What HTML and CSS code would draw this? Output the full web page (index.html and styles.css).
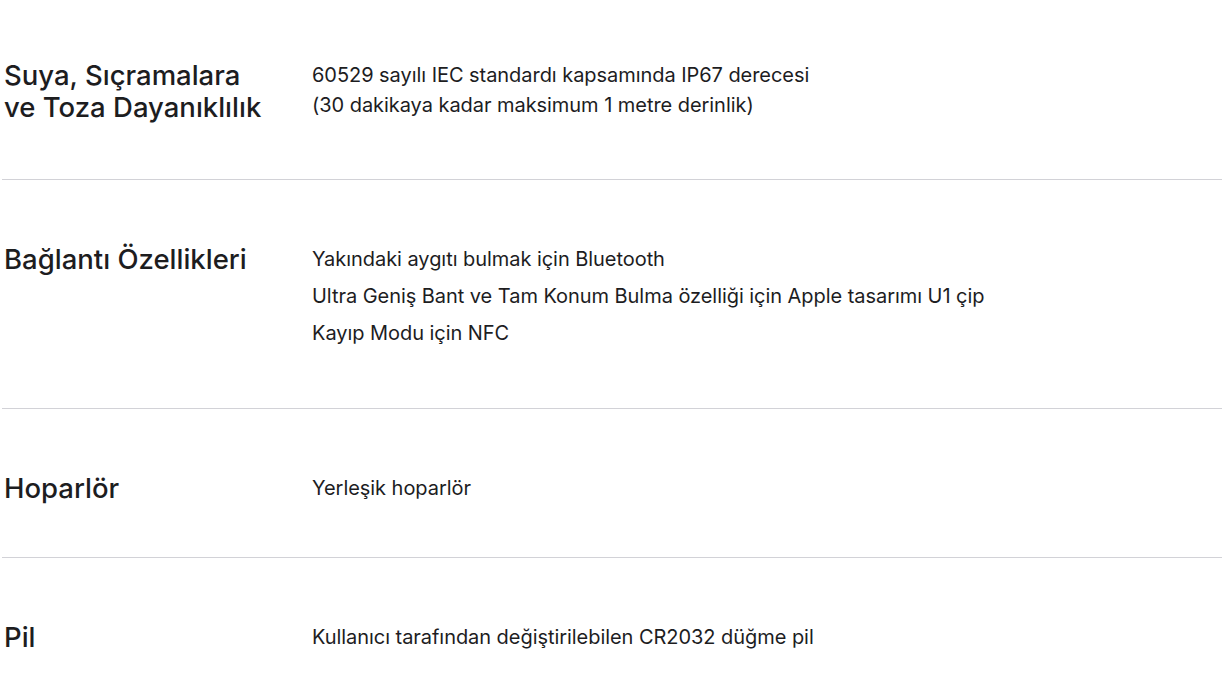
FILE: index.html
```html
<!DOCTYPE html>
<html lang="tr">
<head>
<meta charset="utf-8">
<title>Teknik Özellikler</title>
<link rel="stylesheet" href="styles.css">
</head>
<body>
<div class="specs">
  <section class="row row-first">
    <h3 class="title">Suya, Sıçramalara<br>ve Toza Dayanıklılık</h3>
    <div class="body">
      <p class="text">60529 sayılı IEC standardı kapsamında IP67 derecesi<br>(30 dakikaya kadar maksimum 1 metre derinlik)</p>
    </div>
  </section>
  <section class="row row-list">
    <h3 class="title">Bağlantı Özellikleri</h3>
    <div class="body list">
      <p class="text">Yakındaki aygıtı bulmak için Bluetooth</p>
      <p class="text">Ultra Geniş Bant ve Tam Konum Bulma özelliği için Apple tasarımı U1 çip</p>
      <p class="text">Kayıp Modu için NFC</p>
    </div>
  </section>
  <section class="row row-short">
    <h3 class="title">Hoparlör</h3>
    <div class="body">
      <p class="text">Yerleşik hoparlör</p>
    </div>
  </section>
  <section class="row row-last">
    <h3 class="title">Pil</h3>
    <div class="body">
      <p class="text">Kullanıcı tarafından değiştirilebilen CR2032 düğme pil</p>
    </div>
  </section>
</div>
</body>
</html>
```

FILE: styles.css
```css
html, body {
  margin: 0;
  padding: 0;
  background: #ffffff;
}
body {
  font-family: Inter, "Noto Sans", "Liberation Sans", sans-serif;
  color: #1d1d1f;
}
.specs {
  margin-left: 2px;
  width: 1220px;
}
.row {
  display: grid;
  grid-template-columns: 310px 1fr;
  align-items: start;
  border-bottom: 1px solid #d2d2d7;
  padding-top: 63px;
  padding-bottom: 57px;
}
.row-first {
  padding-top: 59px;
  padding-bottom: 56px;
}
.row-list {
  padding-bottom: 60px;
}
.row-short {
  padding-bottom: 53px;
}
.row-last {
  border-bottom: none;
}
.title {
  margin: 0;
  padding-left: 2px;
  font-size: 27.5px;
  line-height: 32px;
  font-weight: 500;
  letter-spacing: 0;
  color: #1d1d1f;
}
.body {
  padding-top: 1px;
  display: flex;
  flex-direction: column;
  gap: 7px;
}
.text {
  margin: 0;
  font-size: 20px;
  line-height: 30px;
  font-weight: 400;
  color: #1d1d1f;
  letter-spacing: -0.05px;
}
```
